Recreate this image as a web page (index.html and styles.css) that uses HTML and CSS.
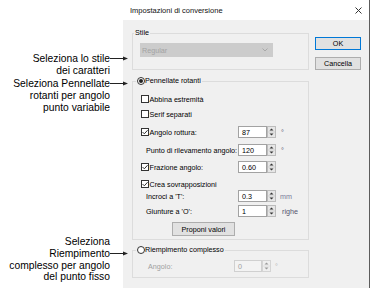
FILE: index.html
```html
<!DOCTYPE html>
<html lang="it">

<head>
    <meta charset="UTF-8">
    <title>Impostazioni di conversione</title>
    <link rel="stylesheet" href="styles.css">
</head>

<body>

    <aside class="notes">
        <div class="note">
            <div class="note-line">Seleziona lo stile<svg class="arrow" width="18" height="5"><path d="M0 2.5H14" stroke="#222"/><path d="M13 0.5L18 2.5L13 4.5Z" fill="#222"/></svg></div>
            <div class="note-line">dei caratteri</div>
        </div>
        <div class="note note-rotate">
            <div class="note-line">Seleziona Pennellate<svg class="arrow" width="18" height="5"><path d="M0 2.5H14" stroke="#222"/><path d="M13 0.5L18 2.5L13 4.5Z" fill="#222"/></svg></div>
            <div class="note-line">rotanti per angolo</div>
            <div class="note-line">punto variabile</div>
        </div>
        <div class="note note-fill">
            <div class="note-line">Seleziona</div>
            <div class="note-line">Riempimento<svg class="arrow" width="18" height="5"><path d="M0 2.5H14" stroke="#222"/><path d="M13 0.5L18 2.5L13 4.5Z" fill="#222"/></svg></div>
            <div class="note-line">complesso per angolo</div>
            <div class="note-line">del punto fisso</div>
        </div>
    </aside>

    <div class="dialog">
        <div class="titlebar">
            <span class="title">Impostazioni di conversione</span>
            <svg class="close" width="7" height="7"><path d="M0.5 0.5L6.5 6.5M6.5 0.5L0.5 6.5" stroke="#333"/></svg>
        </div>

        <div class="dialog-body">
            <div class="groups">
                <fieldset class="group group-style">
                    <legend>Stile</legend>
                    <div class="combo">
                        <span>Regular</span>
                        <svg width="6" height="4"><path d="M0.5 0.5L3 3L5.5 0.5" stroke="#a8a8a8" fill="none"/></svg>
                    </div>
                </fieldset>

                <fieldset class="group group-rotate">
                    <legend><svg class="radio" width="8" height="8"><circle cx="4" cy="4" r="3.5" fill="#fff" stroke="#333"/><circle cx="4" cy="4" r="2" fill="#222"/></svg>Pennellate rotanti</legend>

                    <div class="row">
                        <svg class="check" width="8" height="8"><rect x="0.5" y="0.5" width="7" height="7" fill="#fff" stroke="#333"/></svg>Abbina estremità
                    </div>
                    <div class="row row-serif">
                        <svg class="check" width="8" height="8"><rect x="0.5" y="0.5" width="7" height="7" fill="#fff" stroke="#333"/></svg>Serif separati
                    </div>
                    <div class="row row-field row-angle">
                        <div class="label"><svg class="check" width="8" height="8"><rect x="0.5" y="0.5" width="7" height="7" fill="#fff" stroke="#333"/><path d="M1.5 4L3.3 5.8L6.6 2.2" stroke="#333" fill="none"/></svg>Angolo rottura:</div>
                        <div class="input">87</div>
                        <svg class="spin" width="9" height="12"><rect x="0.5" y="0.5" width="8" height="11" fill="#e6e6e6" stroke="#bcbcbc"/><path d="M1 6H8" stroke="#cfcfcf"/><path d="M4.5 2.5L6.5 4.5H2.5Z M4.5 9.5L6.5 7.5H2.5Z" fill="#333"/></svg>
                        <span class="unit">°</span>
                    </div>
                    <div class="row row-field row-point">
                        <div class="label label-indent">Punto di rilevamento angolo:</div>
                        <div class="input">120</div>
                        <svg class="spin" width="9" height="12"><rect x="0.5" y="0.5" width="8" height="11" fill="#e6e6e6" stroke="#bcbcbc"/><path d="M1 6H8" stroke="#cfcfcf"/><path d="M4.5 2.5L6.5 4.5H2.5Z M4.5 9.5L6.5 7.5H2.5Z" fill="#333"/></svg>
                        <span class="unit">°</span>
                    </div>
                    <div class="row row-field row-fraction">
                        <div class="label"><svg class="check" width="8" height="8"><rect x="0.5" y="0.5" width="7" height="7" fill="#fff" stroke="#333"/><path d="M1.5 4L3.3 5.8L6.6 2.2" stroke="#333" fill="none"/></svg>Frazione angolo:</div>
                        <div class="input">0.60</div>
                        <svg class="spin" width="9" height="12"><rect x="0.5" y="0.5" width="8" height="11" fill="#e6e6e6" stroke="#bcbcbc"/><path d="M1 6H8" stroke="#cfcfcf"/><path d="M4.5 2.5L6.5 4.5H2.5Z M4.5 9.5L6.5 7.5H2.5Z" fill="#333"/></svg>
                    </div>
                    <div class="row row-overlap">
                        <svg class="check" width="8" height="8"><rect x="0.5" y="0.5" width="7" height="7" fill="#fff" stroke="#333"/><path d="M1.5 4L3.3 5.8L6.6 2.2" stroke="#333" fill="none"/></svg>Crea sovrapposizioni
                    </div>
                    <div class="row row-field row-cross">
                        <div class="label label-indent">Incroci a 'T':</div>
                        <div class="input">0.3</div>
                        <svg class="spin" width="9" height="12"><rect x="0.5" y="0.5" width="8" height="11" fill="#e6e6e6" stroke="#bcbcbc"/><path d="M1 6H8" stroke="#cfcfcf"/><path d="M4.5 2.5L6.5 4.5H2.5Z M4.5 9.5L6.5 7.5H2.5Z" fill="#333"/></svg>
                        <span class="unit unit-mm">mm</span>
                    </div>
                    <div class="row row-field row-joint">
                        <div class="label label-indent">Giunture a 'O':</div>
                        <div class="input">1</div>
                        <svg class="spin" width="9" height="12"><rect x="0.5" y="0.5" width="8" height="11" fill="#e6e6e6" stroke="#bcbcbc"/><path d="M1 6H8" stroke="#cfcfcf"/><path d="M4.5 2.5L6.5 4.5H2.5Z M4.5 9.5L6.5 7.5H2.5Z" fill="#333"/></svg>
                        <span class="unit unit-rows">righe</span>
                    </div>
                    <button class="btn btn-propose">Proponi valori</button>
                </fieldset>

                <fieldset class="group group-fill">
                    <legend><svg class="radio" width="8" height="8"><circle cx="4" cy="4" r="3.5" fill="#fff" stroke="#333"/></svg>Riempimento complesso</legend>
                    <div class="row row-field disabled">
                        <div class="label label-fill">Angolo:</div>
                        <div class="input input-off">0</div>
                        <svg class="spin" width="9" height="12"><rect x="0.5" y="0.5" width="8" height="11" fill="#efefef" stroke="#d4d4d4"/><path d="M1 6H8" stroke="#dedede"/><path d="M4.5 2.5L6.5 4.5H2.5Z M4.5 9.5L6.5 7.5H2.5Z" fill="#9a9a9a"/></svg>
                        <span class="unit unit-off">°</span>
                    </div>
                </fieldset>
            </div>

            <div class="buttons">
                <button class="btn btn-default">OK</button>
                <button class="btn">Cancella</button>
            </div>
        </div>
    </div>

</body>

</html>
```

FILE: styles.css
```css
* {
    box-sizing: border-box;
}

body {
    margin: 0;
    width: 389px;
    height: 303px;
    display: flex;
    align-items: flex-start;
    background-color: #fff;
    font-family: "Liberation Sans", Arial, sans-serif;
    color: #000;
}

/* callouts on the left */

.notes {
    width: 123px;
    flex: none;
    padding: 52px 13px 0 0;
    font-size: 10.3px;
}

.note-line {
    display: flex;
    justify-content: flex-end;
    align-items: center;
    height: 12px;
    white-space: nowrap;
}

.note-rotate {
    margin-top: 1px;
}

.note-fill {
    margin-top: 123px;
}

.note-fill .note-line {
    height: 11.7px;
}

.arrow {
    display: block;
    flex: none;
    position: relative;
    z-index: 1;
    margin-right: -18px;
}

/* dialog */

.dialog {
    width: 247px;
    height: 288px;
    flex: none;
    display: flex;
    flex-direction: column;
    border-right: 1px solid #5c5c5c;
    font-size: 7.2px;
}

.titlebar {
    height: 20px;
    display: flex;
    justify-content: space-between;
    align-items: center;
    padding: 0 7px;
    background-color: #fff;
}

.title {
    font-size: 7.5px;
    color: #111;
}

.dialog-body {
    flex: 1;
    display: flex;
    gap: 6px;
    padding-left: 9px;
    background-color: #f0f0f0;
}

.groups {
    width: 177px;
    display: flex;
    flex-direction: column;
}

.group {
    margin: 0;
    min-width: 0;
    border: 1px solid #dcdcdc;
    padding: 0 0 0 8px;
}

.group legend {
    display: flex;
    align-items: center;
    height: 10px;
    line-height: 10px;
    padding: 0 1px;
    margin-left: -5px;
}

.group-style {
    margin-top: 8px;
    padding: 5px 0 12px 7px;
}

.group-style legend {
    margin-left: -6px;
}

.group-rotate {
    margin-top: 6px;
    padding-top: 8px;
    padding-bottom: 3px;
}

.group-fill {
    margin-top: 5px;
    padding-top: 5px;
    padding-bottom: 5px;
}

.combo {
    width: 133px;
    height: 14px;
    display: flex;
    justify-content: space-between;
    align-items: center;
    padding: 0 5px 0 2px;
    background-color: #cccccc;
    color: #a3a3a3;
}

.radio {
    flex: none;
    margin-right: 0;
}

.check {
    flex: none;
    margin-right: 0.5px;
}

.row {
    display: flex;
    align-items: center;
    height: 10px;
    white-space: nowrap;
}

.row-field {
    height: 12px;
}

.row-serif {
    margin-top: 5px;
}

.row-angle {
    margin-top: 7px;
}

.row-point {
    margin-top: 6px;
}

.row-fraction {
    margin-top: 5px;
}

.row-overlap {
    margin-top: 6px;
}

.row-cross {
    margin-top: 1px;
}

.row-joint {
    margin-top: 3px;
}

.label {
    width: 97px;
    flex: none;
    display: flex;
    align-items: center;
}

.label-indent {
    padding-left: 5px;
}

.label-fill {
    width: 93px;
    padding-left: 7px;
}

.input {
    width: 29px;
    height: 12px;
    flex: none;
    display: flex;
    align-items: center;
    padding-left: 3px;
    border: 1px solid #a2a2a2;
    background-color: #fff;
}

.input-off {
    width: 28px;
    border-color: #d0d0d0;
    background-color: #f3f3f3;
}

.spin {
    display: block;
    flex: none;
}

.unit {
    margin-left: 5px;
    color: #54546e;
}

.unit-mm {
    margin-left: 4px;
    color: #7a7a9a;
}

.unit-rows {
    margin-left: 6px;
}

.unit-off {
    margin-left: 4px;
    color: #b4b4b4;
}

.disabled {
    color: #a0a0a0;
}

.buttons {
    width: 46px;
    display: flex;
    flex-direction: column;
    gap: 7px;
    padding-top: 17px;
}

.btn {
    width: 46px;
    height: 13px;
    padding: 0;
    border: 1px solid #adadad;
    background-color: #e1e1e1;
    font-family: inherit;
    font-size: 7.2px;
    line-height: 11px;
    color: #000;
}

.btn-default {
    border-color: #0078d7;
}

.btn-propose {
    display: block;
    width: 63px;
    height: 14px;
    margin: 5px 0 0 31px;
}
```
